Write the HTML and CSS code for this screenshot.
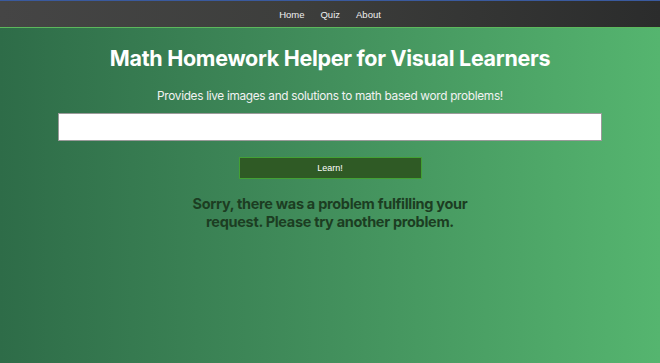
FILE: index.html
```html
<!DOCTYPE html>
<html lang="en">
<head>
    <meta charset="UTF-8">
    <meta name="viewport" content="width=device-width, initial-scale=1.0">
    <title>Math Homework Helper</title>
    <link rel="stylesheet" href="styles.css">
</head>
<body>
    <nav class="navbar">
        <a href="#">Home</a>
        <a href="#">Quiz</a>
        <a href="#">About</a>
    </nav>

    <main class="main-container">
        <h1>Math Homework Helper for Visual Learners</h1>
        <p class="subtitle">Provides live images and solutions to math based word problems!</p>
        <form action="#" id="problem-form">
            <input type="text" id="problem" name="problem">
            <button type="submit">Learn!</button>
        </form>
        <div id="error-message">Sorry, there was a problem fulfilling your request. Please try another problem.</div>
    </main>
</body>
</html>
```

FILE: styles.css
```css
* {
    margin: 0;
    padding: 0;
    box-sizing: border-box;
    font-family: 'Inter', sans-serif;
}

body {
    background: linear-gradient(90deg, #2e6c48 0%, #428f5c 50%, #55b56f 100%);
    min-height: 100vh;
}

.navbar {
    height: 28px;
    display: flex;
    justify-content: center;
    align-items: center;
    gap: 16px;
    background: linear-gradient(90deg, #454545 0%, #3d3e3c 45%, #2b2c2c 100%);
    border-top: 1px solid #3a5a9e;
    border-bottom: 1px solid #5cb85c;
}

.navbar a {
    color: #f0f0f0;
    text-decoration: none;
    font-family: 'Liberation Sans', Arial, sans-serif;
    font-size: 9.5px;
}

.main-container {
    display: flex;
    flex-direction: column;
    align-items: center;
    padding: 17px 58px 0;
}

.main-container h1 {
    color: white;
    font-size: 21.5px;
    font-weight: 700;
    letter-spacing: -0.3px;
}

.subtitle {
    color: #f2f2f2;
    font-size: 11.8px;
    letter-spacing: -0.3px;
    margin-top: 18px;
}

form#problem-form {
    width: 100%;
    display: flex;
    flex-direction: column;
    align-items: center;
    gap: 16px;
    margin-top: 10px;
}

input {
    width: 100%;
    height: 28px;
    border: 1px solid #9a9a9a;
    background: white;
}

button {
    width: 183px;
    height: 22px;
    background: #2f5a25;
    border: 1px solid #43a034;
    color: white;
    font-family: 'Liberation Sans', Arial, sans-serif;
    font-size: 9px;
    cursor: pointer;
}

#error-message {
    max-width: 300px;
    margin-top: 16px;
    color: #1c3d22;
    font-size: 14.5px;
    letter-spacing: -0.3px;
    font-weight: 700;
    text-align: center;
    line-height: 18px;
}
```
